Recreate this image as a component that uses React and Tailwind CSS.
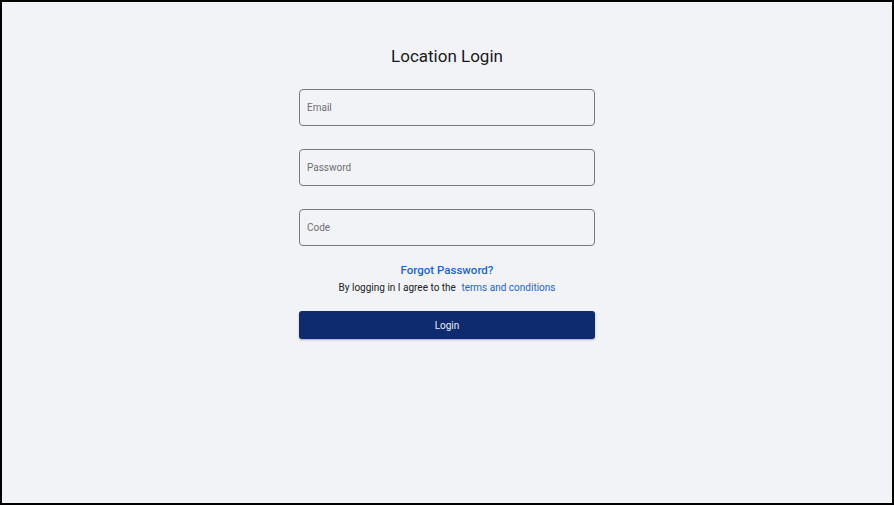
export default function App() {
  return (
    <div
      className="w-[894px] h-[505px] border-2 border-black bg-[#f2f3f7] flex flex-col items-center"
      style={{ fontFamily: "Roboto, 'Liberation Sans', sans-serif" }}
    >
      <h1 className="mt-[42px] text-[17px] leading-[24px] text-[#1a1a1a]">Location Login</h1>
      <div className="mt-[21px] w-[296px] flex flex-col gap-[23px]">
        {["Email", "Password", "Code"].map((p) => (
          <div
            key={p}
            className="h-[37px] rounded-[4px] border border-[#7a7a7a] flex items-center px-[7px] text-[10px] text-[#6f6f6f]"
          >
            {p}
          </div>
        ))}
      </div>
      <div className="mt-[16px] text-[11.5px] leading-[16px] font-medium text-[#1a66d0]">Forgot Password?</div>
      <div className="mt-[3px] text-[10px] leading-[14px] text-[#222]">
        By logging in I agree to the <span className="ml-[3px] text-[#1a66d0]">terms and conditions</span>
      </div>
      <button className="mt-[16px] w-[296px] h-[28px] rounded-[3px] bg-[#0d2b6e] text-[#e8ebf3] text-[10px] shadow-[0_1px_2px_rgba(0,0,0,0.3)]">
        Login
      </button>
    </div>
  );
}
